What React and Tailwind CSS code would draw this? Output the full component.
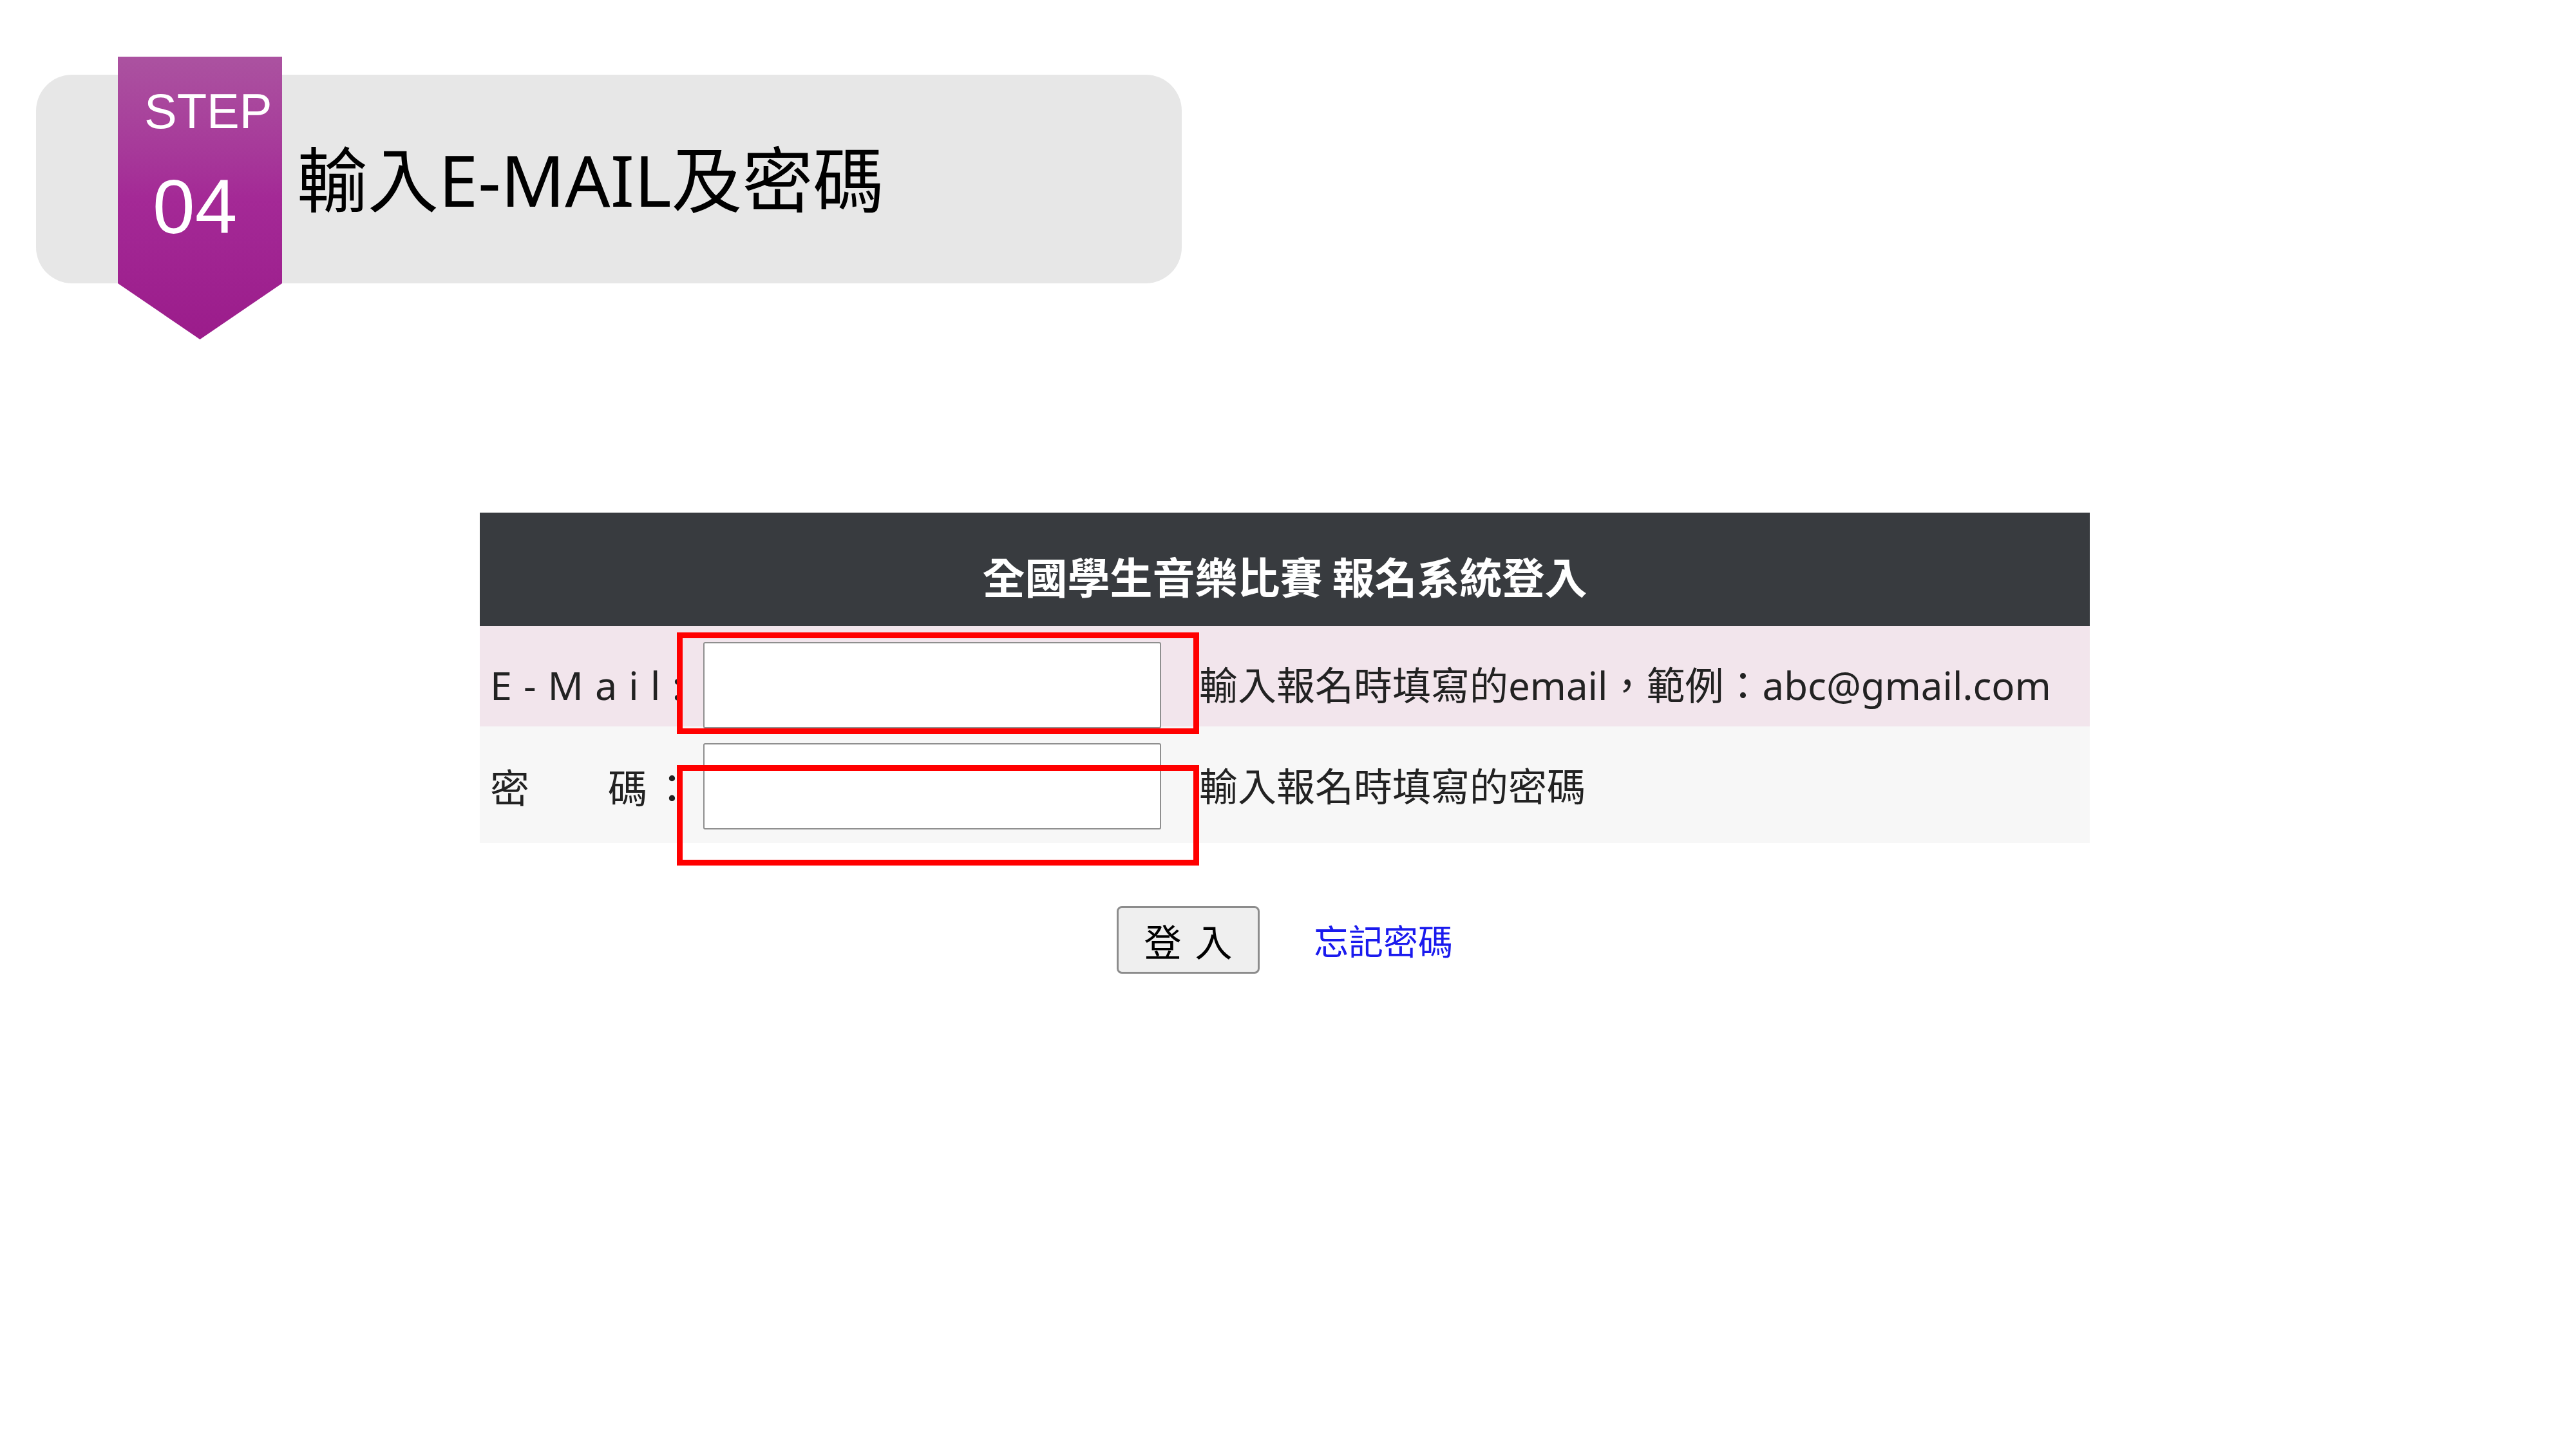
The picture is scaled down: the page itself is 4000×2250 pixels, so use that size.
// App.jsx
// Step 04 slide: header pill with a purple "STEP 04" ribbon, then the
// login form screenshot (e-mail / password rows) with red call-out boxes.

const SANS = "font-['Noto_Sans','Noto_Sans_CJK_TC',sans-serif]";

// --- Ribbon badge (sits over the left end of the pill) ---
function StepBadge() {
  return (
    <div
      className="absolute left-[127px] top-[-28px] h-[439px] w-[255px] bg-gradient-to-b from-[#ab52a0] via-[#a42996] to-[#9b1c8b] [clip-path:polygon(0_0,100%_0,100%_80.2%,50%_100%,0_80.2%)] font-['Liberation_Sans',Arial,sans-serif] text-white"
      aria-hidden="true"
    >
      <div className="mt-[47px] pl-[41px] text-[76px] leading-none">STEP</div>
      <div className="mt-[51px] pl-[54px] text-[118px] leading-none">04</div>
    </div>
  );
}

function FieldRow({ label, labelClass, desc, rowClass, type }) {
  return (
    <div className={`flex items-center pl-[16px] ${rowClass}`}>
      <span className={`w-[331px] shrink-0 whitespace-pre text-[61px] text-[#222] ${labelClass}`}>
        {label}
      </span>
      <input
        type={type}
        className="h-[134px] w-[711px] shrink-0 rounded-[3px] border-2 border-[#8f8f8f] bg-white"
      />
      <span className="ml-[59px] whitespace-nowrap text-[60px] text-[#222]">{desc}</span>
    </div>
  );
}

export default function App() {
  return (
    <div className={`relative h-[2250px] w-[4000px] overflow-hidden bg-white pt-[116px] ${SANS}`}>

      {/* ── Step header ─────────────────────────────────────────── */}
      <div className="relative ml-[56px] w-[1779px]">
        <div className="flex h-[324px] items-center rounded-[56px] bg-[#e7e7e7] pl-[405px]">
          <h1 className="text-[110px] font-normal leading-none text-black">輸入E-MAIL及密碼</h1>
        </div>
        <StepBadge />
      </div>

      {/* ── Login form ──────────────────────────────────────────── */}
      <div className="relative ml-[745px] mt-[356px] w-[2500px]">
        <div className="flex h-[176px] items-center justify-center bg-[#383b3f] pt-[18px]">
          <span className="font-['Noto_Sans_CJK_TC',sans-serif] text-[66px] font-bold text-white">
            全國學生音樂比賽 報名系統登入
          </span>
        </div>

        <FieldRow
          rowClass="h-[156px] bg-[#f2e5ec] pt-[28px]"
          label="E-Mail:"
          labelClass="tracking-[18px]"
          type="text"
          desc="輸入報名時填寫的email，範例：abc@gmail.com"
        />
        <FieldRow
          rowClass="h-[181px] bg-[#f7f7f7] pt-[5px]"
          label={<>密　　碼<span className="ml-[8px]">：</span></>}
          labelClass="font-['Noto_Sans_CJK_TC',sans-serif]"
          type="password"
          desc="輸入報名時填寫的密碼"
        />

        {/* red call-outs drawn over the inputs */}
        <div className="pointer-events-none absolute left-[306px] top-[186px] h-[158px] w-[811px] border-[9px] border-[#ff0000]" />
        <div className="pointer-events-none absolute left-[306px] top-[392px] h-[156px] w-[811px] border-[9px] border-[#ff0000]" />

        <div className="mt-[98px] flex items-center justify-center gap-[84px]">
          <button
            type="button"
            className="h-[105px] w-[222px] rounded-[8px] border-[3px] border-[#8c8c8c] bg-[#efefef] font-['Noto_Sans_CJK_TC',sans-serif] text-[58px] leading-none text-black [word-spacing:8px]"
          >
            登 入
          </button>
          <a href="#" className="font-['Noto_Sans_CJK_TC',sans-serif] text-[54px] text-[#1a1aee]">
            忘記密碼
          </a>
        </div>
      </div>
    </div>
  );
}
